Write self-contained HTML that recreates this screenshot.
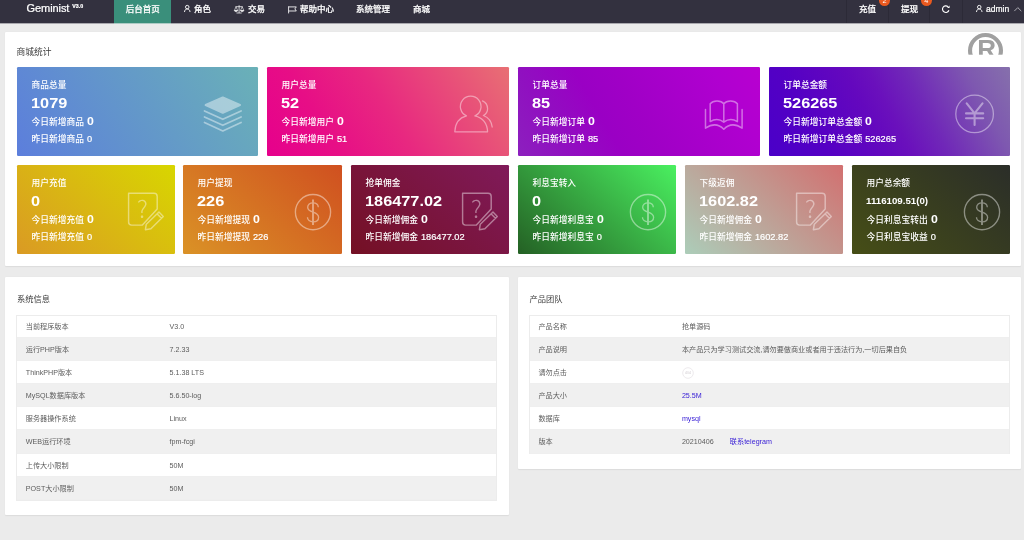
<!DOCTYPE html>
<html lang="zh-CN">
<head>
<meta charset="utf-8">
<title>Geminist</title>
<style>
*{box-sizing:border-box;margin:0;padding:0}
html,body{width:1024px;height:540px;overflow:hidden}
body{position:relative;background:#ebebeb;font-family:"Liberation Sans","Noto Sans CJK SC",sans-serif;color:#333}
#w{position:absolute;left:0;top:0;width:1024px;height:540px;overflow:hidden;will-change:transform}
a{text-decoration:none;color:#3b22d6}
.hd{position:absolute;left:0;top:0;width:1024px;height:23px;background:#33313f;color:#fff;overflow:hidden;border-bottom:0}
.hdl{position:absolute;left:0;top:23px;width:1024px;height:1px;background:#a9a8ae}
.logo{position:absolute;left:26.6px;top:0;height:17.5px;line-height:17.5px;font-size:11px;letter-spacing:-0.09px;white-space:nowrap}
.logo sup{position:absolute;left:45.6px;top:-2.3px;letter-spacing:0;font-size:5.3px;font-weight:700;line-height:17.5px}
.nav{position:absolute;top:0;height:23px;font-size:8.53px;font-weight:500;line-height:18.5px;white-space:nowrap;color:#fff}
.nav.on{background:#3a8f7b}
.nav span,.logo{-webkit-text-stroke:0.22px #fff}
.nav span{position:absolute}
.nav svg{position:absolute;overflow:visible}
.sep{position:absolute;top:0;width:1px;height:23px;background:#2c2a37}
.badge{position:absolute;top:-5.4px;width:11.4px;height:11.4px;border-radius:50%;background:#e9591f;color:#fff;font-size:7.3px;line-height:11.4px;text-align:center}
.card{position:absolute;background:#fff;border-radius:1px;box-shadow:0 0.6px 1.2px rgba(0,0,0,.07)}
.ct{position:absolute;left:12.2px;font-size:8.25px;line-height:12px;color:#3a3a3a;white-space:nowrap}
.tile{position:absolute;border-radius:1.2px;color:#fff;overflow:hidden}
.tile div{position:absolute;left:14.6px;white-space:nowrap}
.t1{top:11.8px;font-size:8.7px;line-height:12px;font-weight:500}
.t2{top:26.2px;left:14.1px !important;font-size:15.4px;line-height:20px;font-weight:700;transform:scaleX(1.06);transform-origin:0 50%}
.t3{top:46.3px;font-size:8.75px;line-height:16px;font-weight:500}
.t3 b{display:inline-block;font-size:11.2px;margin-left:0.4px;font-weight:700;transform:scaleX(1.1);transform-origin:0 50%}
.t4{top:66.1px;font-size:8.75px;line-height:12px;font-weight:500}
.t4 i{font-style:normal;font-size:9.25px;margin-left:0.4px;-webkit-text-stroke:0.2px #fff}
.tile svg{position:absolute;overflow:visible}
.tb{position:absolute;top:38px;width:481px;border:1px solid #ececec;font-size:7.15px;color:#5c5c5c}
.tr{position:absolute;left:0;width:479px;white-space:nowrap;line-height:24.8px;border-bottom:1px solid #efefef}
.tr.g{background:#f0f0f0}
.tr span{position:absolute;left:8.4px;top:0}
.tr span+span{left:151.9px}
.tb.l .tr span{left:8.8px}
.tb.l .tr span+span{left:152.5px}
</style>
</head>
<body>
<div id="w">
<div class="hd">
  <div class="logo">Geminist<sup>V3.0</sup></div>
  <div class="nav on" style="left:114px;width:57px"><span style="left:11.7px">后台首页</span></div>
  <div class="nav" style="left:171px;width:51px"><svg style="left:12.8px;top:5.1px" width="6.5" height="7.4" viewBox="0 0 7 8" fill="none" stroke="#fff" stroke-width="1"><circle cx="3.5" cy="2.3" r="1.9"/><path d="M0.5 7.6C0.6 5.4 2 4.3 3.5 4.3S6.4 5.4 6.5 7.6"/></svg><span style="left:22.9px">角色</span></div>
  <div class="nav" style="left:222px;width:54px">
    <svg style="left:12.2px;top:4.9px" width="10.2" height="8.6" viewBox="0 0 10.2 8.6" fill="none" stroke="#fff" stroke-width="0.75" stroke-linejoin="round"><path d="M5.1 0.2V7.9M2.5 8H7.7M1.5 1.7H8.7"/><path d="M2 1.8L0.4 5.5H3.7ZM8.2 1.8L6.5 5.5H9.8Z" stroke-width="0.6"/><path d="M0.3 5.6H3.8C3.5 7.1 0.6 7.1 0.3 5.6ZM6.4 5.6H9.9C9.6 7.1 6.7 7.1 6.4 5.6Z" fill="#fff" stroke-width="0.4"/></svg>
    <span style="left:25.9px">交易</span></div>
  <div class="nav" style="left:276px;width:68px">
    <svg style="left:11.8px;top:5.8px" width="9" height="7.6" viewBox="0 0 9 7.6" fill="none" stroke="#fff" stroke-width="0.85"><path d="M0.6 0.3V7.4M0.6 0.9H8.3L6.9 2.9L8.3 5H0.6"/></svg>
    <span style="left:23.9px">帮助中心</span></div>
  <div class="nav" style="left:344px;width:57px"><span style="left:11.9px">系统管理</span></div>
  <div class="nav" style="left:401px;width:40px"><span style="left:11.9px">商城</span></div>
  <div class="sep" style="left:846px"></div>
  <div class="nav" style="left:847px;width:41px"><span style="left:11.9px">充值</span></div>
  <div class="sep" style="left:888px"></div>
  <div class="nav" style="left:889px;width:41px"><span style="left:11.9px">提现</span></div>
  <div class="sep" style="left:929px"></div>
  <div class="nav" style="left:930px;width:32px">
    <svg style="left:11.6px;top:5.2px" width="8.4" height="8" viewBox="0 0 8.4 8" fill="none" stroke="#fff" stroke-width="1.15"><path d="M6.9 5.3A3.3 3.3 0 1 1 6 1.7"/><path d="M7.6 0.4V2.9H5.1Z" fill="#fff" stroke="none"/></svg>
  </div>
  <div class="sep" style="left:962px"></div>
  <div class="nav" style="left:963px;width:61px"><svg style="left:12.9px;top:5.2px" width="6.5" height="7.4" viewBox="0 0 7 8" fill="none" stroke="#fff" stroke-width="1"><circle cx="3.5" cy="2.3" r="1.9"/><path d="M0.5 7.6C0.6 5.4 2 4.3 3.5 4.3S6.4 5.4 6.5 7.6"/></svg><span style="left:23px">admin</span>
    <svg style="left:50.8px;top:6.9px" width="7.6" height="4.4" viewBox="0 0 7.6 4.4" fill="none" stroke="#b9b8bf" stroke-width="0.9"><path d="M0.3 4.1L3.8 0.6L7.3 4.1"/></svg>
  </div>
  <div class="badge" style="left:878.8px">2</div>
  <div class="badge" style="left:920.5px">4</div>
</div>
<div class="hdl"></div><div class="hdl" style="left:114px;width:57px;background:#adcbc4"></div>
<div class="card" style="left:5px;top:32px;width:1016px;height:234px;overflow:hidden">
  <div class="ct" style="top:13.7px;left:11.6px;font-size:8.75px">商城统计</div>
  <svg style="position:absolute;left:962px;top:0" width="38" height="23" viewBox="0 0 38 23"><g><circle cx="18.5" cy="18.5" r="15.45" fill="none" stroke="#a0a0a0" stroke-width="4.1"/><text x="10.2" y="25.7" font-family="Liberation Sans, sans-serif" font-weight="700" font-size="26" fill="#a0a0a0">R</text></g><rect x="0" y="22.7" width="38" height="1" fill="#fff"/></svg>
</div>
<div class="tile" style="left:17px;top:67px;width:241px;height:89px;background:linear-gradient(57deg,#5c7edc,#6ab1b7)">
  <div class="t1">商品总量</div><div class="t2">1079</div><div class="t3">今日新增商品 <b>0</b></div><div class="t4">昨日新增商品 <i>0</i></div>
  <svg style="left:186px;top:28px" width="40" height="37" viewBox="0 0 40 37" fill="none" stroke="#fff" stroke-width="1.7" stroke-linejoin="round" stroke-linecap="round" opacity="0.43"><g transform="translate(0.3 0.9)"><path d="M19.5 1.6L36.6 9.2L19.5 16.8L2.4 9.2Z" fill="#fff" stroke-width="2.2"/><path d="M1.2 15L19.5 23.4L37.8 15M1.2 21L19.5 29.4L37.8 21M1.2 26.6L19.5 35L37.8 26.6"/></g></svg>
</div>
<div class="tile" style="left:267px;top:67px;width:242px;height:89px;background:linear-gradient(58deg,rgb(230,0,140) 0%,rgb(231,14,134) 25%,rgb(232,40,128) 50%,rgb(232,84,120) 81%,rgb(232,112,116) 100%)">
  <div class="t1">用户总量</div><div class="t2">52</div><div class="t3">今日新增用户 <b>0</b></div><div class="t4">昨日新增用户 <i>51</i></div>
  <svg style="left:186px;top:28px" width="41" height="39" viewBox="0 0 41 39" fill="none" stroke="#fff" stroke-width="1.25" stroke-linejoin="round" stroke-linecap="round" opacity="0.43"><g transform="translate(0.6 0.2)"><path d="M12.9 20.7A10.3 10.3 0 1 1 21.3 20.7C29 22.6 33.6 28.4 34 36.6H1.2C1.6 28.4 5.2 22.6 12.9 20.7Z"/><path d="M28.9 5.7C32.2 7.2 34 10.2 34 13.6C34 16.4 32.4 18.9 29.8 20.3C34.6 22.2 38 26.4 38.6 31.8"/></g></svg>
</div>
<div class="tile" style="left:518px;top:67px;width:242px;height:89px;background:linear-gradient(60deg,rgb(140,32,190) 0%,rgb(144,16,192) 17%,rgb(154,0,196) 36%,rgb(160,0,198) 50%,rgb(176,0,208) 83%,rgb(184,0,208) 100%)">
  <div class="t1">订单总量</div><div class="t2">85</div><div class="t3">今日新增订单 <b>0</b></div><div class="t4">昨日新增订单 <i>85</i></div>
  <svg style="left:186px;top:32px" width="40" height="32" viewBox="0 0 40 32" fill="none" stroke="#fff" stroke-width="1.5" stroke-linejoin="round" stroke-linecap="round" opacity="0.43"><g transform="translate(0.2 0.6)"><path d="M1.3 9.8V28.6C8 24 14.5 24.4 19.6 29.6C24.7 24.4 31.2 24 37.9 28.6V9.8"/><path d="M19.6 4.2C16.8 0.6 9.2 0.2 6 4.2V22C10 19.6 15.4 19.4 19.6 22.6C23.8 19.4 29.2 19.6 33.2 22V4.2C30 0.2 22.4 0.6 19.6 4.2ZM19.6 4.2V22.6"/></g></svg>
</div>
<div class="tile" style="left:769px;top:67px;width:241px;height:89px;background:linear-gradient(62deg,rgb(74,0,200) 0%,rgb(84,0,196) 21%,rgb(100,8,190) 42%,rgb(106,16,188) 50%,rgb(112,40,184) 63%,rgb(126,88,176) 84%,rgb(134,112,172) 100%)">
  <div class="t1">订单总金额</div><div class="t2">526265</div><div class="t3">今日新增订单总金额 <b>0</b></div><div class="t4">昨日新增订单总金额 <i>526265</i></div>
  <svg style="left:186px;top:27px" width="40" height="40" viewBox="0 0 40 40" fill="none" stroke="#fff" stroke-linecap="round" opacity="0.43"><g transform="translate(0.1 0.4)"><circle cx="19.5" cy="19.5" r="18.8" stroke-width="1.25"/><path d="M11.6 9L19.5 19L27.4 9M19.5 19V30.6M10.9 19H28.1M10.9 23.9H28.1" stroke-width="2.1"/></g></svg>
</div>
<div class="tile" style="left:17px;top:165px;width:158px;height:89px;background:linear-gradient(42deg,#da9a24,#d8d600)">
  <div class="t1">用户充值</div><div class="t2">0</div><div class="t3">今日新增充值 <b>0</b></div><div class="t4">昨日新增充值 <i>0</i></div>
  <svg style="left:110px;top:27px" width="39" height="39" viewBox="0 0 39 39" fill="none" stroke="#fff" stroke-width="1.45" stroke-linejoin="round" stroke-linecap="round" opacity="0.43"><g transform="translate(0.6 0.5)"><path d="M1 0.8H26.4Q29.6 0.8 29.6 4V16.6L14.8 32.6H4Q1 32.6 1 29.6Z"/><g transform="translate(0.5 0.4)"><path d="M30.9 19.2L35.2 23.5L22.8 35.9L17.3 36.8L18.2 31.3ZM29.1 21L33.4 25.3"/></g><text x="14.8" y="25.6" text-anchor="middle" font-family="Noto Sans CJK SC, sans-serif" font-weight="300" font-size="24" fill="#fff" stroke="none">?</text></g></svg>
</div>
<div class="tile" style="left:183px;top:165px;width:159px;height:89px;background:linear-gradient(42deg,#da9226,#d05020)">
  <div class="t1">用户提现</div><div class="t2">226</div><div class="t3">今日新增提现 <b>0</b></div><div class="t4">昨日新增提现 <i>226</i></div>
  <svg style="left:111px;top:28px" width="39" height="39" viewBox="0 0 39 39" fill="none" stroke="#fff" opacity="0.43"><g transform="translate(0.0 0.1)"><circle cx="19" cy="19" r="17.6" stroke-width="1.35"/><path d="M19 6.5V31.9" stroke-width="1.9"/><g transform="translate(19 19.2) scale(0.95 0.93) translate(-19 -19.1)"><path d="M24.6 13.6C24.4 10.6 22.2 8.9 19 8.9C15.8 8.9 13.4 10.8 13.4 13.6C13.4 20.4 24.9 17.2 24.9 24.3C24.9 27.4 22.4 29.3 19 29.3C15.6 29.3 13.2 27.4 13.2 24.3" stroke-width="1.4"/></g></g></svg>
</div>
<div class="tile" style="left:351px;top:165px;width:158px;height:89px;background:linear-gradient(42deg,#741024,#801a5a)">
  <div class="t1">抢单佣金</div><div class="t2">186477.02</div><div class="t3">今日新增佣金 <b>0</b></div><div class="t4">昨日新增佣金 <i>186477.02</i></div>
  <svg style="left:110px;top:27px" width="39" height="39" viewBox="0 0 39 39" fill="none" stroke="#fff" stroke-width="1.45" stroke-linejoin="round" stroke-linecap="round" opacity="0.43"><g transform="translate(0.6 0.5)"><path d="M1 0.8H26.4Q29.6 0.8 29.6 4V16.6L14.8 32.6H4Q1 32.6 1 29.6Z"/><g transform="translate(0.5 0.4)"><path d="M30.9 19.2L35.2 23.5L22.8 35.9L17.3 36.8L18.2 31.3ZM29.1 21L33.4 25.3"/></g><text x="14.8" y="25.6" text-anchor="middle" font-family="Noto Sans CJK SC, sans-serif" font-weight="300" font-size="24" fill="#fff" stroke="none">?</text></g></svg>
</div>
<div class="tile" style="left:518px;top:165px;width:158px;height:89px;background:linear-gradient(42deg,#246024,#4af060)">
  <div class="t1">利息宝转入</div><div class="t2">0</div><div class="t3">今日新增利息宝 <b>0</b></div><div class="t4">昨日新增利息宝 <i>0</i></div>
  <svg style="left:111px;top:28px" width="39" height="39" viewBox="0 0 39 39" fill="none" stroke="#fff" opacity="0.43"><g transform="translate(0.0 0.1)"><circle cx="19" cy="19" r="17.6" stroke-width="1.35"/><path d="M19 6.5V31.9" stroke-width="1.9"/><g transform="translate(19 19.2) scale(0.95 0.93) translate(-19 -19.1)"><path d="M24.6 13.6C24.4 10.6 22.2 8.9 19 8.9C15.8 8.9 13.4 10.8 13.4 13.6C13.4 20.4 24.9 17.2 24.9 24.3C24.9 27.4 22.4 29.3 19 29.3C15.6 29.3 13.2 27.4 13.2 24.3" stroke-width="1.4"/></g></g></svg>
</div>
<div class="tile" style="left:685px;top:165px;width:158px;height:89px;background:linear-gradient(42deg,#accdb9,#d27070)">
  <div class="t1">下级返佣</div><div class="t2">1602.82</div><div class="t3">今日新增佣金 <b>0</b></div><div class="t4">昨日新增佣金 <i>1602.82</i></div>
  <svg style="left:110px;top:27px" width="39" height="39" viewBox="0 0 39 39" fill="none" stroke="#fff" stroke-width="1.45" stroke-linejoin="round" stroke-linecap="round" opacity="0.43"><g transform="translate(0.6 0.5)"><path d="M1 0.8H26.4Q29.6 0.8 29.6 4V16.6L14.8 32.6H4Q1 32.6 1 29.6Z"/><g transform="translate(0.5 0.4)"><path d="M30.9 19.2L35.2 23.5L22.8 35.9L17.3 36.8L18.2 31.3ZM29.1 21L33.4 25.3"/></g><text x="14.8" y="25.6" text-anchor="middle" font-family="Noto Sans CJK SC, sans-serif" font-weight="300" font-size="24" fill="#fff" stroke="none">?</text></g></svg>
</div>
<div class="tile" style="left:852px;top:165px;width:158px;height:89px;background:linear-gradient(42deg,#464e16,#2b2e29)">
  <div class="t1">用户总余额</div><div class="t2" style="font-size:9.7px;transform:none">1116109.51(0)</div><div class="t3">今日利息宝转出 <b>0</b></div><div class="t4">今日利息宝收益 <i>0</i></div>
  <svg style="left:111px;top:28px" width="39" height="39" viewBox="0 0 39 39" fill="none" stroke="#fff" opacity="0.43"><g transform="translate(0.0 0.1)"><circle cx="19" cy="19" r="17.6" stroke-width="1.35"/><path d="M19 6.5V31.9" stroke-width="1.9"/><g transform="translate(19 19.2) scale(0.95 0.93) translate(-19 -19.1)"><path d="M24.6 13.6C24.4 10.6 22.2 8.9 19 8.9C15.8 8.9 13.4 10.8 13.4 13.6C13.4 20.4 24.9 17.2 24.9 24.3C24.9 27.4 22.4 29.3 19 29.3C15.6 29.3 13.2 27.4 13.2 24.3" stroke-width="1.4"/></g></g></svg>
</div>
<div class="card" style="left:5px;top:277px;width:504px;height:238px">
  <div class="ct" style="top:17.2px;left:12px">系统信息</div>
  <div class="tb l" style="left:11px;height:186px">
    <div class="tr" style="top:-1px;height:23px"><span>当前程序版本</span><span>V3.0</span></div>
    <div class="tr g" style="top:22px;height:23px"><span>运行PHP版本</span><span>7.2.33</span></div>
    <div class="tr" style="top:45px;height:23px"><span>ThinkPHP版本</span><span>5.1.38 LTS</span></div>
    <div class="tr g" style="top:68px;height:23px"><span>MySQL数据库版本</span><span>5.6.50-log</span></div>
    <div class="tr" style="top:91px;height:23px"><span>服务器操作系统</span><span>Linux</span></div>
    <div class="tr g" style="top:114px;height:24px"><span>WEB运行环境</span><span>fpm-fcgi</span></div>
    <div class="tr" style="top:138px;height:23px"><span>上传大小限制</span><span>50M</span></div>
    <div class="tr g" style="top:161px;height:23px"><span>POST大小限制</span><span>50M</span></div>
  </div>
</div>
<div class="card" style="left:518px;top:277px;width:503px;height:192px">
  <div class="ct" style="top:17.2px;left:11.6px">产品团队</div>
  <div class="tb" style="left:11px;height:139px">
    <div class="tr" style="top:-1px;height:23px"><span>产品名称</span><span>抢单源码</span></div>
    <div class="tr g" style="top:22px;height:23px"><span>产品说明</span><span>本产品只为学习测试交流,请勿要做商业或者用于违法行为,一切后果自负</span></div>
    <div class="tr" style="top:45px;height:23px"><span>请勿点击</span><span><svg style="position:absolute;left:0.3px;top:5.6px" width="12" height="12" viewBox="0 0 12 12"><circle cx="6" cy="6" r="5.3" fill="none" stroke="#ebe8eb" stroke-width="0.9"/><text x="6" y="7.2" text-anchor="middle" font-family="Liberation Sans, sans-serif" font-weight="700" font-size="3.6" fill="#e2dfe2">404</text></svg></span></div>
    <div class="tr g" style="top:68px;height:23px"><span>产品大小</span><span><a>25.5M</a></span></div>
    <div class="tr" style="top:91px;height:23px"><span>数据库</span><span><a>mysql</a></span></div>
    <div class="tr g" style="top:114px;height:24px"><span>版本</span><span>20210406<a style="margin-left:16.2px">联系telegram</a></span></div>
  </div>
</div>
</div>
</body>
</html>
